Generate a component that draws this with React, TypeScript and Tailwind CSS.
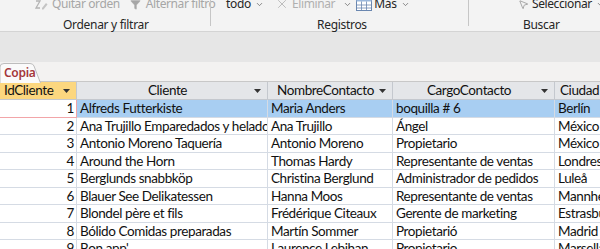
import { ChevronDown, Filter, X, MousePointer2 } from 'lucide-react';

const cols = ['w-[77px]', 'w-[191px]', 'w-[125px]', 'w-[162px]', 'w-[100px]'];

const rows: [number, string, string, string, string][] = [
  [1, 'Alfreds Futterkiste', 'Maria Anders', 'boquilla # 6', 'Berlín'],
  [2, 'Ana Trujillo Emparedados y helados', 'Ana Trujillo', 'Ángel', 'México D.F.'],
  [3, 'Antonio Moreno Taquería', 'Antonio Moreno', 'Propietario', 'México D.F.'],
  [4, 'Around the Horn', 'Thomas Hardy', 'Representante de ventas', 'Londres'],
  [5, 'Berglunds snabbköp', 'Christina Berglund', 'Administrador de pedidos', 'Luleå'],
  [6, 'Blauer See Delikatessen', 'Hanna Moos', 'Representante de ventas', 'Mannheim'],
  [7, 'Blondel père et fils', 'Frédérique Citeaux', 'Gerente de marketing', 'Estrasburgo'],
  [8, 'Bólido Comidas preparadas', 'Martín Sommer', 'Propietarió', 'Madrid'],
  [9, "Bon app'", 'Laurence Lebihan', 'Propietario', 'Marsella'],
];

function SortClear() {
  return (
    <svg width="13" height="11" viewBox="0 0 13 11" className="shrink-0">
      <path d="M1 2h4L1 9h4" fill="none" stroke="#b4b4b4" strokeWidth="1.3" />
      <path d="M7 9l4-5 1.5 1.5-4 5H7z" fill="#c4c4c4" />
    </svg>
  );
}

function TableIcon() {
  return (
    <svg width="16" height="13" viewBox="0 0 16 13" className="shrink-0">
      <rect x="0.5" y="0.5" width="15" height="12" fill="#fff" stroke="#6a87b0" />
      <rect x="0.5" y="0.5" width="15" height="3" fill="#9ab7dc" />
      <path d="M0.5 7h15M0.5 10h15M5.5 3.5v9M10.5 3.5v9" stroke="#6a87b0" strokeWidth="0.8" />
    </svg>
  );
}

function Chev() {
  return <ChevronDown size={9} strokeWidth={2} className="text-[#666] shrink-0" />;
}

function HeaderCell({ label, w, align, gold }: { label: string; w: string; align?: string; gold?: boolean }) {
  return (
    <div
      className={`${w} shrink-0 h-full flex items-center border-r border-[#c4c8ce] px-1 ${gold ? 'bg-[#fcd77f]' : 'bg-[#e4e6e9]'}`}
    >
      <span className={`flex-1 whitespace-nowrap overflow-hidden ${align ?? 'text-center'}`}>{label}</span>
      <svg width="7" height="4" viewBox="0 0 7 4" className="shrink-0 mr-[2px]">
        <path d="M0 0h7L3.5 4z" fill="#333" />
      </svg>
    </div>
  );
}

export default function App() {
  return (
    <div className="w-[600px] h-[249px] overflow-hidden bg-[#f3f2f1] font-['Lato','Liberation_Sans',sans-serif]">
      {/* ribbon */}
      <div className="h-[32px] bg-[#f3f3f3] border-b border-[#d4d4d4] flex text-[12px] whitespace-nowrap font-['Noto_Sans','Liberation_Sans',sans-serif]">
        <div className="w-[210px] shrink-0 flex flex-col">
          <div className="h-[12px] flex items-center pl-[35px] -mt-[2px] text-[#a6a6a6]">
            <SortClear />
            <span className="ml-[4px] tracking-[-0.4px]">Quitar orden</span>
            <Filter size={11} fill="#a6a6a6" strokeWidth={1} className="ml-[10px] shrink-0" />
            <span className="ml-[5px] tracking-[-0.4px]">Alternar filtro</span>
          </div>
          <div className="mt-[6px] pl-[63px] text-[#262626] tracking-[-0.3px]">Ordenar y filtrar</div>
        </div>
        <div className="w-px h-[26px] bg-[#c6c6c6] shrink-0" />
        <div className="w-[257px] shrink-0 flex flex-col">
          <div className="h-[12px] flex items-center pl-[15px] -mt-[2px] text-[#262626]">
            <span className="tracking-[-0.3px]">todo</span>
            <span className="ml-[4px]"><Chev /></span>
            <X size={14} strokeWidth={1.4} className="ml-[11px] text-[#b0b0b0] shrink-0" />
            <span className="ml-[3px] text-[#b0b0b0] tracking-[-0.4px]">Eliminar</span>
            <span className="ml-[8px]"><Chev /></span>
            <span className="ml-[4px]"><TableIcon /></span>
            <span className="ml-[2px] tracking-[-0.3px]">Más</span>
            <span className="ml-[4px]"><Chev /></span>
          </div>
          <div className="mt-[6px] pl-[106px] text-[#262626] tracking-[-0.3px]">Registros</div>
        </div>
        <div className="w-px h-[26px] bg-[#c6c6c6] shrink-0" />
        <div className="flex-1 flex flex-col">
          <div className="h-[12px] flex items-center pl-[49px] -mt-[2px] text-[#262626]">
            <MousePointer2 size={11} strokeWidth={1.3} className="text-[#777] shrink-0" />
            <span className="ml-[3px] tracking-[-0.4px]">Seleccionar</span>
            <span className="ml-[4px]"><Chev /></span>
          </div>
          <div className="mt-[6px] pl-[54px] text-[#262626] tracking-[-0.3px]">Buscar</div>
        </div>
      </div>

      {/* gray band */}
      <div className="h-[30px] bg-[#e6e6e6]" />

      {/* tab strip */}
      <div className="h-[20px] flex items-end border-b border-[#c8c8c8] bg-[#f3f2f1]">
        <div className="relative w-[41px] h-[19px] flex items-center pl-[4px] -mb-px">
          <svg width="41" height="20" viewBox="0 0 41 20" className="absolute inset-0">
            <path d="M0 20V4Q0 0.5 4 0.5H30Q33 0.5 34 3L40.5 20" fill="#fafafa" stroke="#bdbdbd" />
          </svg>
          <span className="relative text-[12px] text-[#a4373a] font-semibold font-['Noto_Sans','Liberation_Sans',sans-serif] tracking-[-0.3px]">
            Copia
          </span>
        </div>
      </div>

      {/* datasheet */}
      <div className="bg-white text-[13.5px] tracking-[-0.4px] text-[#111] w-max">
        <div className="h-[18px] flex border-b border-[#c4c8ce]">
          <HeaderCell label="IdCliente" w={cols[0]} align="text-left" gold />
          <HeaderCell label="Cliente" w={cols[1]} />
          <HeaderCell label="NombreContacto" w={cols[2]} />
          <HeaderCell label="CargoContacto" w={cols[3]} />
          <HeaderCell label="Ciudad" w={cols[4]} align="text-left pl-[1px]" />
        </div>
        {rows.map(([id, cli, nom, cargo, ciudad]) => {
          const sel = id === 1;
          return (
            <div key={id} className="h-[17.5px] flex">
              <div
                className={`${cols[0]} shrink-0 text-right pr-[2px] leading-[16px] border-b border-r ${
                  sel ? 'bg-white border-[#f2a5a8]' : 'border-[#d5dbe4]'
                }`}
              >
                {id}
              </div>
              {[cli, nom, cargo, ciudad].map((v, i) => (
                <div
                  key={i}
                  className={`${cols[i + 1]} shrink-0 overflow-hidden whitespace-nowrap pl-[3px] leading-[16px] border-b border-r border-[#d5dbe4] ${
                    sel ? 'bg-[#a8cef2]' : ''
                  }`}
                >
                  {v}
                </div>
              ))}
            </div>
          );
        })}
      </div>
    </div>
  );
}
